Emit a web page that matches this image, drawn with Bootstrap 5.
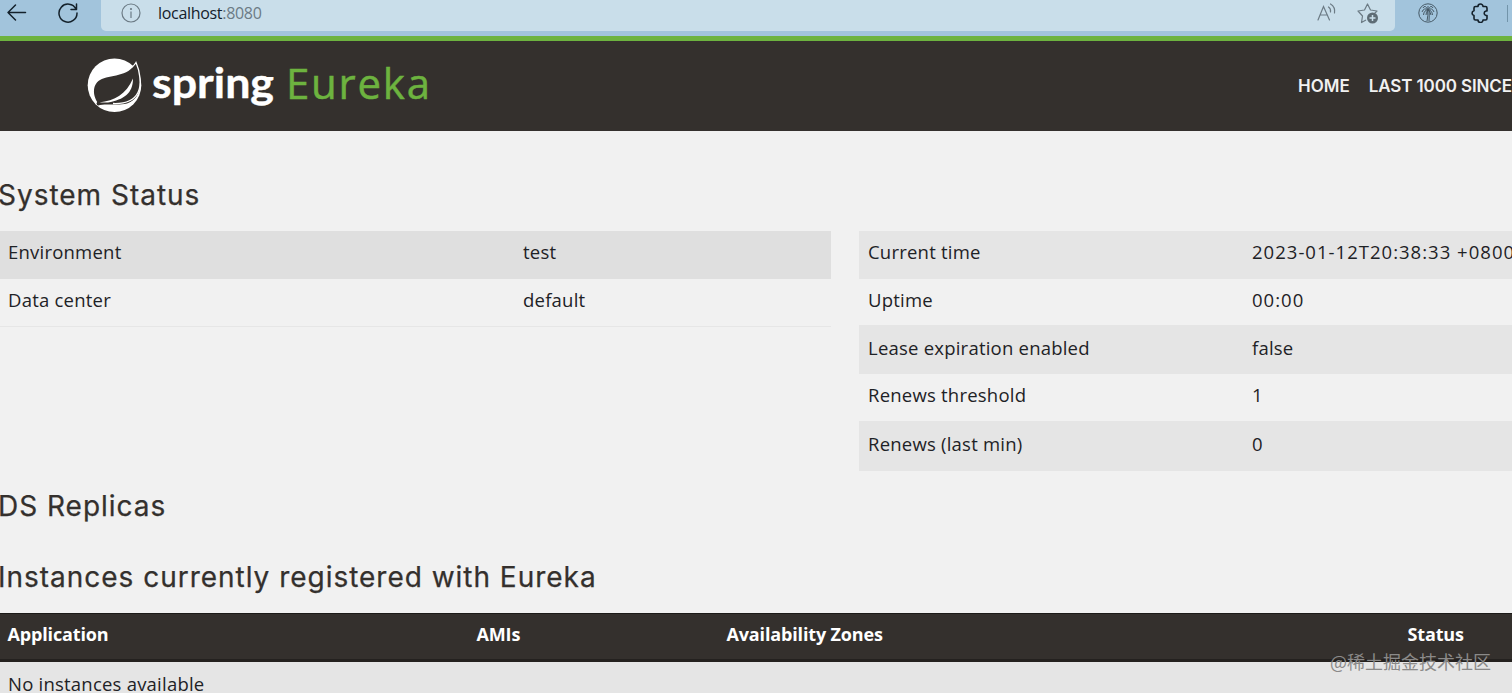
<!DOCTYPE html>
<html lang="en">
<head>
<meta charset="utf-8">
<meta name="viewport" content="width=device-width, initial-scale=1">
<title>Eureka</title>
<link href="https://cdn.jsdelivr.net/npm/bootstrap@5.3.0/dist/css/bootstrap.min.css" rel="stylesheet">
<style>
body{background:#f1f1f1;color:#1e2226;font-family:"Open Sans",sans-serif;font-size:18px;height:693px;overflow:hidden;position:relative}
.browser-bar{height:36px;background:#a2c4dc}
.nav-tools{width:101px;padding-left:6px;gap:29px;height:26px}
.address{width:1294px;height:31px;background:#c9deea;border-radius:0 0 5px 5px;padding:0 15px 5px 20px;font:16px "Open Sans",sans-serif;color:#6c7b85}
.address b{font-weight:400;color:#14212b}
.address .url{margin-left:17px;letter-spacing:-.31px}
.extensions{height:26px;margin-left:23px;gap:32px}
.divider{width:1px;height:17px;background:#7294aa;margin:5px 0 0 17px}
.site-header{height:95px;border-top:5px solid #6db33f;background:#34302d;padding-left:87px}
.site-header a{color:#f1f1f1;font:600 17px Inter,sans-serif;text-decoration:none;white-space:nowrap}
.site-menu{width:214px;gap:19px}
.site-menu a:last-child{letter-spacing:-.12px}
h1{font:400 28px/34px Inter,sans-serif;color:#34302d;margin:0 0 0 -2px;white-space:nowrap;letter-spacing:.98px;-webkit-text-stroke:.25px #34302d}
.status-grid{width:1520px;gap:28px;margin-top:19px;height:240px}
.status-grid table,.instances{table-layout:fixed;margin:0;color:inherit}
.status-grid td,.instances td,.instances th{padding:7px 8px 0;line-height:28px;border:0;background:none;color:inherit;white-space:nowrap;box-shadow:none;vertical-align:top}
.status-grid td,.instances td{font-size:18.5px;letter-spacing:.22px}
.status-grid tr:nth-child(odd){background:#e5e5e5}
.status-grid tr{height:48px}
.status-grid tr:nth-child(2){height:46px}
.status-grid tr:nth-child(3){height:49px}
.status-grid tr:nth-child(4){height:47px}
.status-grid tr:nth-child(5){height:50px}
.status-grid tr:nth-child(3) td,.status-grid tr:nth-child(5) td{padding-top:8.500px}
.status-grid td.digits{letter-spacing:1.02px}
.status-grid .env tr:nth-child(odd){background:#dfdfdf}
.status-grid .env tr:last-child{height:47px;border-bottom:1px solid #e6e6e6}
.live td{padding-left:9px!important}
.instances{width:1520px}
.instances thead{background:#34302d;color:#fff;border-top:1px solid #1c1a18;border-bottom:3px solid #24211f}
.instances th{letter-spacing:-.15px;padding:6px 8px 11px 7.500px}
.instances td{padding:8px}
.instances tbody{background:#e5e5e5}
.watermark{position:absolute;left:1330px;top:648px;font:400 18px/26px "Noto Sans CJK SC",sans-serif;color:#8b8a89;white-space:nowrap}
</style>
</head>
<body>
<div class="browser-bar d-flex">
  <div class="nav-tools d-flex align-items-center">
    <svg width="22" height="22" viewBox="0 0 22 22" fill="none" stroke="#14212b" stroke-width="1.5" stroke-linecap="round" stroke-linejoin="round"><path d="M19.500 10.500H2M9.500 3L2 10.500 9.500 18"/></svg>
    <svg width="22" height="22" viewBox="0 0 22 22" fill="none" stroke="#14212b" stroke-width="1.5" stroke-linecap="round" stroke-linejoin="round"><path d="M19 7A9 9 0 1 0 20 11M19.500 2v5.500H14"/></svg>
  </div>
  <div class="address d-flex align-items-center">
    <svg width="20" height="20" viewBox="0 0 20 20" fill="none" stroke="#6c7b85" stroke-width="1.2"><circle cx="10" cy="10" r="9"/><path d="M10 8.500V15"/><circle cx="10" cy="6" r=".5"/></svg>
    <span class="url"><b>localhost</b>:8080</span>
    <svg class="ms-auto" width="20" height="20" viewBox="0 0 20 20" fill="none" stroke="#6c7b85" stroke-width="1.2" stroke-linecap="round"><path d="M1 17L6.500 3.500l6 13.500M3 12h7.500M11.500 4q2.500 1.500 2 5M13.500 1q5 3 4 9"/></svg>
    <svg style="margin-left:20px" width="23" height="23" viewBox="0 0 23 23" fill="none" stroke="#6c7b85" stroke-width="1.2" stroke-linejoin="round"><path d="M9 18l-4.500 2.500 1-6.500L1 9l6.500-1L10.500 2l3 6 6.500 1-2.500 2.500"/><circle cx="15.500" cy="16" r="5.500" fill="#5e6c75" stroke="none"/><path d="M15.500 13v6M12.500 16h6" stroke="#c9deea" stroke-width="1.500"/></svg>
  </div>
  <div class="extensions d-flex align-items-center">
    <svg width="20" height="20" viewBox="0 0 20 20" fill="none" stroke="#465966" stroke-width="1"><circle cx="10" cy="10" r="9.200"/><path d="M9.500 7q1 5-.5 11M11 7q.5 5 0 11M10 7q-4-3-6 2M10 7Q6 7 5.500 12M10 7q4-3 6 2M10 7q4 0 4.500 5M10 7Q7 1 5 5M10 7q3-6 5-2M10 7Q8 9 8 12M10 7q2.500 2 3 5M10 7V3"/></svg>
    <svg width="20" height="20" viewBox="0 0 20 20" fill="none" stroke="#14212b" stroke-width="1.600" stroke-linejoin="round"><path d="M5.500 3.500H8a2.500 2.500 0 0 1 5 0h2.500q1.500 0 1.500 1.500v3h-1a2.300 2.300 0 0 0 0 4.500h1v3q0 1.500-1.500 1.500H13a2.500 2.500 0 0 1-5 0H5.500Q4 17 4 15.500v-3a2.400 2.400 0 0 1 0-4.700V5q0-1.500 1.500-1.500z"/></svg>
  </div>
  <div class="divider"></div>
</div>
<header class="site-header d-flex justify-content-between">
  <svg width="350" height="85" viewBox="87 41 350 85">
    <circle cx="114.500" cy="85.300" r="26.800" fill="#fff"/>
    <path d="M136 62.500q3.500 8 4 20c0 12-5 18-13 21-8 2-18 0-27 1.500-7-6-9-20 0-25 10-6 28-2 36-17.500z" fill="#34302d"/>
    <path d="M132 67q2.500-2 4-4.500c4 9 6 22 2 30-4 8-12 11.500-25 11" fill="none" stroke="#fff" stroke-width="1.300"/>
    <path d="M99 102.500c16-2 27-8 34-24 0 15-9 21-25 24z" fill="#fff"/>
    <circle cx="98.500" cy="103.500" r="1.900" fill="#34302d"/>
    <text x="152" y="98" textLength="122" lengthAdjust="spacingAndGlyphs" font-family="Lato" font-weight="700" font-size="42" fill="#fff" stroke="#fff" stroke-width=".4" stroke-linejoin="round">spring</text>
    <text x="286" y="98.500" textLength="144" font-family="Open Sans" font-size="42" fill="#6db33f" stroke="#6db33f" stroke-width=".5">Eureka</text>
  </svg>
  <nav class="site-menu d-flex align-items-center"><a href="#">HOME</a><a href="#">LAST 1000 SINCE</a></nav>
</header>
<main>
  <h1 style="padding-top:47px">System Status</h1>
  <div class="status-grid d-flex align-items-start">
    <table class="table env" style="width:831px"><colgroup><col style="width:515px"><col></colgroup>
      <tr><td>Environment</td><td>test</td></tr><tr><td>Data center</td><td>default</td></tr></table>
    <table class="table live" style="width:661px"><colgroup><col style="width:384px"><col></colgroup>
      <tr><td>Current time</td><td class="digits">2023-01-12T20:38:33 +0800</td></tr><tr><td>Uptime</td><td class="digits">00:00</td></tr><tr><td>Lease expiration enabled</td><td>false</td></tr><tr><td>Renews threshold</td><td>1</td></tr><tr><td>Renews (last min)</td><td>0</td></tr></table>
  </div>
  <h1 style="margin-top:18px">DS Replicas</h1>
  <h1 style="margin-top:37px">Instances currently registered with Eureka</h1>
  <table class="table instances" style="margin-top:19px"><colgroup><col style="width:469px"><col style="width:250px"><col style="width:681px"><col></colgroup>
    <thead><tr><th>Application</th><th>AMIs</th><th>Availability Zones</th><th>Status</th></tr></thead>
    <tbody><tr><td colspan="4">No instances available</td></tr></tbody></table>
</main>
<div class="watermark">@稀土掘金技术社区</div>
<script src="https://cdn.jsdelivr.net/npm/bootstrap@5.3.0/dist/js/bootstrap.bundle.min.js"></script>
</body>
</html>
